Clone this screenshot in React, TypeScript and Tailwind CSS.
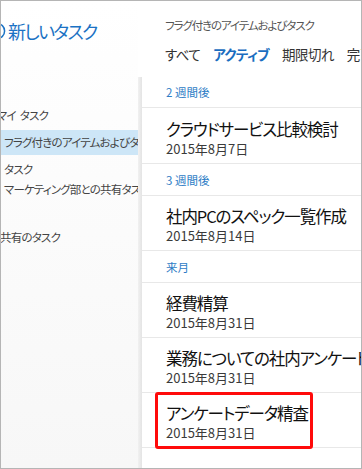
import React from "react";

type Row =
  | { kind: "section"; label: string; first?: boolean }
  | { kind: "task"; title: string; date: string; marked?: boolean };

const rows: Row[] = [
  { kind: "section", label: "2 週間後", first: true },
  { kind: "task", title: "クラウドサービス比較検討", date: "2015年8月7日" },
  { kind: "section", label: "3 週間後" },
  { kind: "task", title: "社内PCのスペック一覧作成", date: "2015年8月14日" },
  { kind: "section", label: "来月" },
  { kind: "task", title: "経費精算", date: "2015年8月31日" },
  { kind: "task", title: "業務についての社内アンケート", date: "2015年8月31日" },
  { kind: "task", title: "アンケートデータ精査", date: "2015年8月31日", marked: true },
];

function Sidebar() {
  return (
    <div className="w-[137px] shrink-0 flex flex-col overflow-hidden whitespace-nowrap bg-gradient-to-b from-white to-[#f7f7f7] text-[11.5px] tracking-[-0.8px] text-[#444]">
      <div className="h-[59px] flex items-center">
        <svg width="18" height="18" viewBox="0 0 18 18" className="-ml-[13px] shrink-0">
          <circle cx="9" cy="9" r="7.6" fill="none" stroke="#1b72c4" strokeWidth="1.5" />
          <path d="M9 5v8M5 9h8" stroke="#1b72c4" strokeWidth="1.5" />
        </svg>
        <span className="ml-[2px] text-[18px] tracking-[-1.6px] text-[#1b72c4] leading-none">新しいタスク</span>
      </div>
      <div className="mt-[45px] leading-[20px] -ml-[4px]">
        マイ<span className="ml-[4px]">タスク</span>
      </div>
      <div className="mt-[5px] h-[25px] leading-[25px] bg-[#cde6f7] pl-[3px] w-[141px]">
        フラグ付きのアイテムおよびタスク
      </div>
      <div className="mt-[4px] leading-[20px] pl-[3px]">タスク</div>
      <div className="leading-[20px] pl-[3px]">マーケティング部との共有タスク</div>
      <div className="mt-[28px] leading-[20px] -ml-[1px]">共有のタスク</div>
    </div>
  );
}

function Header() {
  return (
    <div className="h-[76px] pl-[27px] whitespace-nowrap overflow-hidden">
      <div className="pt-[16px] leading-[16px] text-[11.5px] tracking-[-1.1px] text-[#555]">
        フラグ付きのアイテムおよびタスク
      </div>
      <div className="mt-[11px] flex gap-[13px] leading-[20px] text-[13.5px] tracking-[-0.6px] text-[#333]">
        <span>すべて</span>
        <span className="font-bold text-[#1a6dc0]">アクティブ</span>
        <span>期限切れ</span>
        <span>完了</span>
      </div>
    </div>
  );
}

function TaskList() {
  return (
    <div className="flex-1 min-w-0 bg-white whitespace-nowrap">
      {rows.map((r, i) =>
        r.kind === "section" ? (
          <div key={i} className="border-b border-[#e8e8e8]">
            <div
              className={`${r.first ? "h-[30px] pt-[7px]" : "h-[31px] pt-[8px]"} pl-[24px] leading-[16px] text-[11.5px] text-[#2d7cc5]`}
            >
              {r.label}
            </div>
          </div>
        ) : (
          <div key={i} className="relative border-b border-[#e8e8e8]">
            <div className={`${i === 1 ? "h-[55px] pt-[10px]" : "h-[54px] pt-[9px]"} pl-[24px] overflow-hidden`}>
              <div className="leading-[22px] text-[16.5px] tracking-[-1.1px] text-[#111]">{r.title}</div>
              <div className="leading-[18px] text-[13px] text-[#3a3a3a]">{r.date}</div>
            </div>
            {r.marked && (
              <div className="absolute left-[13px] top-[-1px] w-[158px] h-[57px] border-[3px] border-[#ff0a0a] rounded-[3px]" />
            )}
          </div>
        )
      )}
    </div>
  );
}

export default function App() {
  return (
    <div className="w-[362px] h-[469px] border border-[#b5b5b5] overflow-hidden flex bg-white font-['Noto_Sans_CJK_JP',sans-serif] [font-feature-settings:'palt']">
      <Sidebar />
      <div className="flex-1 min-w-0 flex flex-col">
        <Header />
        <div className="flex-1 flex min-h-0">
          <div className="w-[4px] shrink-0 bg-gradient-to-r from-[#f1f1f1] to-[#e4e4e4]" />
          <TaskList />
        </div>
      </div>
    </div>
  );
}
